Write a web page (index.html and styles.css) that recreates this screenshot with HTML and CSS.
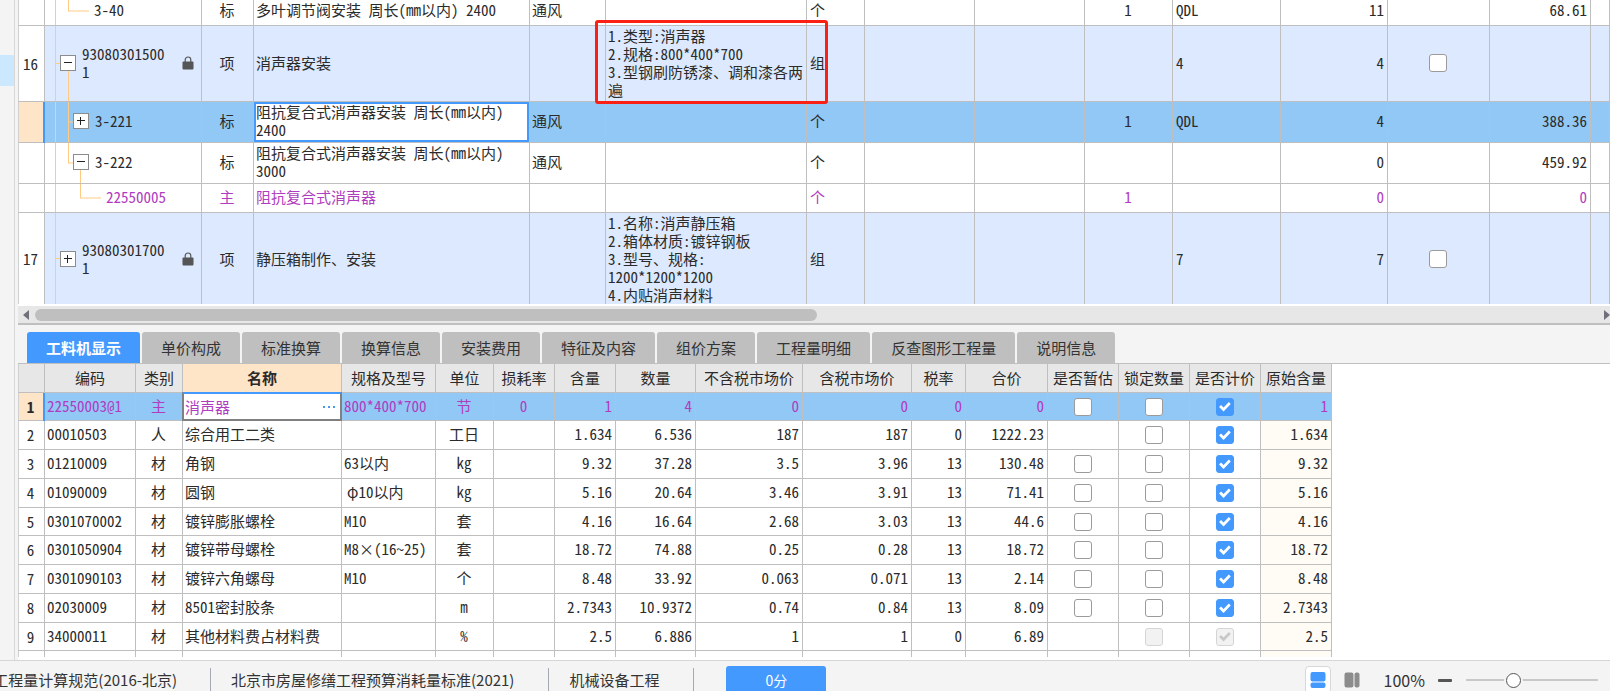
FILE: index.html
```html
<!DOCTYPE html>
<html lang="zh-CN">
<head>
<meta charset="utf-8">
<meta name="viewport" content="width=device-width, initial-scale=1">
<title>工程预算</title>
<link rel="stylesheet" href="styles.css">
</head>
<body>
<svg class="defs" width="0" height="0" aria-hidden="true">
  <symbol id="lock" viewBox="0 0 12 14"><path d="M3.2 6V3.8a2.8 2.8 0 0 1 5.6 0V6" fill="none" stroke="#555" stroke-width="1.2"/><rect x="0.5" y="5.5" width="11" height="8" rx="1" fill="#555"/></symbol>
</svg>
<div class="app">
  <div class="workspace">
    <aside class="rail"><div class="rail-mark"></div></aside>
    <main class="main">
      <div class="bill">
        <table class="grid bill-grid">
          <colgroup><col class="w27"><col class="w157"><col class="w52"><col class="w276"><col class="w76"><col class="w201"><col class="w58"><col class="w110"><col class="w110"><col class="w88"><col class="w108"><col class="w107"><col class="w102"><col class="w101"><col></colgroup>
          <tbody>
            <tr class="h29">
              <td class="c"></td>
              <td class="tree l2"><svg class="lines" aria-hidden="true"><line x1="10.5" y1="0" x2="10.5" y2="100%"/><line x1="23.5" y1="0" x2="23.5" y2="50%"/><line x1="23" y1="50%" x2="44" y2="50%"/></svg>3-40</td>
              <td class="c">标</td><td>多叶调节阀安装 周长(mm以内) 2400</td><td>通风</td><td></td><td>个</td><td></td><td></td><td class="c">1</td><td>QDL</td><td class="r">11</td><td></td><td class="r">68.61</td><td></td>
            </tr>
            <tr class="h76 item">
              <td class="c num">16</td>
              <td class="tree l1"><svg class="lines" aria-hidden="true"><line x1="10.5" y1="0" x2="10.5" y2="100%"/><line x1="10" y1="50%" x2="16" y2="50%"/><line x1="23.5" y1="50%" x2="23.5" y2="100%"/></svg><div class="node"><button class="toggle" type="button" aria-label="折叠"></button><span class="code">930803015001</span><svg class="lock" aria-hidden="true"><use href="#lock"/></svg></div></td>
              <td class="c">项</td><td>消声器安装</td><td></td><td class="marked">1.类型:消声器<br>2.规格:800*400*700<br>3.型钢刷防锈漆、调和漆各两遍<span class="callout"></span></td><td>组</td><td></td><td></td><td></td><td>4</td><td class="r">4</td><td class="c"><input type="checkbox" aria-label="锁定综合单价"></td><td></td><td></td>
            </tr>
            <tr class="h41 selected">
              <td class="c num"></td>
              <td class="tree l2 start"><svg class="lines" aria-hidden="true"><line x1="10.5" y1="0" x2="10.5" y2="100%"/><line x1="23.5" y1="0" x2="23.5" y2="100%"/><line x1="23" y1="50%" x2="29" y2="50%"/></svg><div class="node"><button class="toggle plus" type="button" aria-label="展开"></button><span>3-221</span></div></td>
              <td class="c">标</td><td class="focus">阻抗复合式消声器安装 周长(mm以内) 2400</td><td>通风</td><td></td><td>个</td><td></td><td></td><td class="c">1</td><td>QDL</td><td class="r">4</td><td></td><td class="r">388.36</td><td></td>
            </tr>
            <tr class="h41">
              <td class="c num"></td>
              <td class="tree l2"><svg class="lines" aria-hidden="true"><line x1="10.5" y1="0" x2="10.5" y2="100%"/><line x1="23.5" y1="0" x2="23.5" y2="50%"/><line x1="23" y1="50%" x2="29" y2="50%"/><line x1="35.5" y1="50%" x2="35.5" y2="100%"/></svg><div class="node"><button class="toggle" type="button" aria-label="折叠"></button><span>3-222</span></div></td>
              <td class="c">标</td><td>阻抗复合式消声器安装 周长(mm以内) 3000</td><td>通风</td><td></td><td>个</td><td></td><td></td><td></td><td></td><td class="r">0</td><td></td><td class="r">459.92</td><td></td>
            </tr>
            <tr class="h29 material">
              <td class="c num"></td>
              <td class="tree l3"><svg class="lines" aria-hidden="true"><line x1="10.5" y1="0" x2="10.5" y2="100%"/><line x1="35.5" y1="0" x2="35.5" y2="50%"/><line x1="35" y1="50%" x2="56" y2="50%"/></svg>22550005</td>
              <td class="c">主</td><td>阻抗复合式消声器</td><td></td><td></td><td>个</td><td></td><td></td><td class="c">1</td><td></td><td class="r">0</td><td></td><td class="r">0</td><td></td>
            </tr>
            <tr class="h91 item">
              <td class="c num">17</td>
              <td class="tree l1"><svg class="lines" aria-hidden="true"><line x1="10.5" y1="0" x2="10.5" y2="100%"/><line x1="10" y1="50%" x2="16" y2="50%"/></svg><div class="node"><button class="toggle plus" type="button" aria-label="展开"></button><span class="code">930803017001</span><svg class="lock" aria-hidden="true"><use href="#lock"/></svg></div></td>
              <td class="c">项</td><td>静压箱制作、安装</td><td></td><td>1.名称:消声静压箱<br>2.箱体材质:镀锌钢板<br>3.型号、规格:<br>1200*1200*1200<br>4.内贴消声材料</td><td>组</td><td></td><td></td><td></td><td>7</td><td class="r">7</td><td class="c"><input type="checkbox" aria-label="锁定综合单价"></td><td></td><td></td>
            </tr>
          </tbody>
        </table>
      </div>
      <div class="hscroll">
        <svg class="arrow" viewBox="0 0 6 10" aria-hidden="true"><path d="M6 0v10L0 5z"/></svg>
        <div class="track"><div class="thumb"></div></div>
        <svg class="arrow" viewBox="0 0 6 10" aria-hidden="true"><path d="M0 0v10l6-5z"/></svg>
      </div>
      <nav class="tabs">
        <button type="button" class="tab active">工料机显示</button><button type="button" class="tab">单价构成</button><button type="button" class="tab">标准换算</button><button type="button" class="tab">换算信息</button><button type="button" class="tab">安装费用</button><button type="button" class="tab">特征及内容</button><button type="button" class="tab">组价方案</button><button type="button" class="tab">工程量明细</button><button type="button" class="tab">反查图形工程量</button><button type="button" class="tab">说明信息</button>
      </nav>
      <div class="detail">
        <table class="grid detail-grid">
          <colgroup><col class="w27"><col class="w91"><col class="w47"><col class="w159"><col class="w94"><col class="w58"><col class="w61"><col class="w61"><col class="w80"><col class="w107"><col class="w109"><col class="w54"><col class="w82"><col class="w71"><col class="w71"><col class="w71"><col class="w71"></colgroup>
          <thead>
            <tr><th></th><th>编码</th><th>类别</th><th class="current">名称</th><th>规格及型号</th><th>单位</th><th>损耗率</th><th>含量</th><th>数量</th><th>不含税市场价</th><th>含税市场价</th><th>税率</th><th>合价</th><th>是否暂估</th><th>锁定数量</th><th>是否计价</th><th>原始含量</th></tr>
          </thead>
          <tbody>
            <tr class="selected material"><td class="c num">1</td><td class="start">22550003@1</td><td class="c">主</td><td class="edit"><div class="editor"><input type="text" value="消声器" aria-label="名称"><button type="button" class="more" aria-label="选择"><i></i><i></i><i></i></button></div></td><td>800*400*700</td><td class="c">节</td><td class="c">0</td><td class="r">1</td><td class="r">4</td><td class="r">0</td><td class="r">0</td><td class="r">0</td><td class="r">0</td><td class="c"><input type="checkbox" aria-label="是否暂估"></td><td class="c"><input type="checkbox" aria-label="锁定数量"></td><td class="c"><input type="checkbox" aria-label="是否计价" checked></td><td class="r orig">1</td></tr>
            <tr><td class="c num">2</td><td>00010503</td><td class="c">人</td><td>综合用工二类</td><td></td><td class="c">工日</td><td></td><td class="r">1.634</td><td class="r">6.536</td><td class="r">187</td><td class="r">187</td><td class="r">0</td><td class="r">1222.23</td><td></td><td class="c"><input type="checkbox" aria-label="锁定数量"></td><td class="c"><input type="checkbox" aria-label="是否计价" checked></td><td class="r orig">1.634</td></tr>
            <tr><td class="c num">3</td><td>01210009</td><td class="c">材</td><td>角钢</td><td>63以内</td><td class="c">kg</td><td></td><td class="r">9.32</td><td class="r">37.28</td><td class="r">3.5</td><td class="r">3.96</td><td class="r">13</td><td class="r">130.48</td><td class="c"><input type="checkbox" aria-label="是否暂估"></td><td class="c"><input type="checkbox" aria-label="锁定数量"></td><td class="c"><input type="checkbox" aria-label="是否计价" checked></td><td class="r orig">9.32</td></tr>
            <tr><td class="c num">4</td><td>01090009</td><td class="c">材</td><td>圆钢</td><td class="wide-start">φ10以内</td><td class="c">kg</td><td></td><td class="r">5.16</td><td class="r">20.64</td><td class="r">3.46</td><td class="r">3.91</td><td class="r">13</td><td class="r">71.41</td><td class="c"><input type="checkbox" aria-label="是否暂估"></td><td class="c"><input type="checkbox" aria-label="锁定数量"></td><td class="c"><input type="checkbox" aria-label="是否计价" checked></td><td class="r orig">5.16</td></tr>
            <tr><td class="c num">5</td><td>0301070002</td><td class="c">材</td><td>镀锌膨胀螺栓</td><td>M10</td><td class="c">套</td><td></td><td class="r">4.16</td><td class="r">16.64</td><td class="r">2.68</td><td class="r">3.03</td><td class="r">13</td><td class="r">44.6</td><td class="c"><input type="checkbox" aria-label="是否暂估"></td><td class="c"><input type="checkbox" aria-label="锁定数量"></td><td class="c"><input type="checkbox" aria-label="是否计价" checked></td><td class="r orig">4.16</td></tr>
            <tr><td class="c num">6</td><td>0301050904</td><td class="c">材</td><td>镀锌带母螺栓</td><td>M8×(16~25)</td><td class="c">套</td><td></td><td class="r">18.72</td><td class="r">74.88</td><td class="r">0.25</td><td class="r">0.28</td><td class="r">13</td><td class="r">18.72</td><td class="c"><input type="checkbox" aria-label="是否暂估"></td><td class="c"><input type="checkbox" aria-label="锁定数量"></td><td class="c"><input type="checkbox" aria-label="是否计价" checked></td><td class="r orig">18.72</td></tr>
            <tr><td class="c num">7</td><td>0301090103</td><td class="c">材</td><td>镀锌六角螺母</td><td>M10</td><td class="c">个</td><td></td><td class="r">8.48</td><td class="r">33.92</td><td class="r">0.063</td><td class="r">0.071</td><td class="r">13</td><td class="r">2.14</td><td class="c"><input type="checkbox" aria-label="是否暂估"></td><td class="c"><input type="checkbox" aria-label="锁定数量"></td><td class="c"><input type="checkbox" aria-label="是否计价" checked></td><td class="r orig">8.48</td></tr>
            <tr><td class="c num">8</td><td>02030009</td><td class="c">材</td><td>8501密封胶条</td><td></td><td class="c">m</td><td></td><td class="r">2.7343</td><td class="r">10.9372</td><td class="r">0.74</td><td class="r">0.84</td><td class="r">13</td><td class="r">8.09</td><td class="c"><input type="checkbox" aria-label="是否暂估"></td><td class="c"><input type="checkbox" aria-label="锁定数量"></td><td class="c"><input type="checkbox" aria-label="是否计价" checked></td><td class="r orig">2.7343</td></tr>
            <tr><td class="c num">9</td><td>34000011</td><td class="c">材</td><td>其他材料费占材料费</td><td></td><td class="c">%</td><td></td><td class="r">2.5</td><td class="r">6.886</td><td class="r">1</td><td class="r">1</td><td class="r">0</td><td class="r">6.89</td><td></td><td class="c"><input type="checkbox" aria-label="锁定数量" disabled></td><td class="c"><input type="checkbox" aria-label="是否计价" checked disabled></td><td class="r orig">2.5</td></tr>
            <tr><td></td><td></td><td></td><td></td><td></td><td></td><td></td><td></td><td></td><td></td><td></td><td></td><td></td><td></td><td></td><td></td><td class="orig"></td></tr>
          </tbody>
        </table>
      </div>
    </main>
  </div>
  <footer class="status">
    <div class="status-item first"><span>工程量计算规范(2016-北京)</span></div>
    <div class="status-item">北京市房屋修缮工程预算消耗量标准(2021)</div>
    <div class="status-item">机械设备工程</div>
    <button type="button" class="score">0分</button>
    <div class="view">
      <button type="button" class="mode on" aria-label="上下布局"><svg width="16" height="16" viewBox="0 0 16 16" aria-hidden="true"><rect x="0.5" y="0" width="15" height="9.6" rx="2"/><rect x="0.5" y="10.6" width="15" height="5.4" rx="2"/></svg></button>
      <button type="button" class="mode" aria-label="左右布局"><svg width="16" height="16" viewBox="0 0 16 16" aria-hidden="true"><rect x="0.5" y="0.5" width="9" height="15" rx="2"/><rect x="10.5" y="0.5" width="5" height="15" rx="2"/></svg></button>
      <span class="percent">100%</span>
      <button type="button" class="minus" aria-label="缩小"></button>
      <input type="range" class="zoom" min="0" max="100" value="34" aria-label="缩放">
    </div>
  </footer>
</div>
</body>
</html>
```
FILE: styles.css
```css
:root {
  --line: #bfbfbf;
  --blue: #4499ff;
  --select: #92c8f6;
  --peach: #ffe5c8;
  --panel: #f4f4f4;
  --purple: #b03cc0;
}
* { box-sizing: border-box; }
body {
  margin: 0;
  overflow: hidden;
  background: var(--panel);
  color: #2b2b2b;
  font: 15px/18px "Noto Sans Mono CJK SC", "Noto Sans CJK SC", sans-serif;
  font-variant-ligatures: none;
}
.defs { position: absolute; }
button, input { font: inherit; color: inherit; margin: 0; padding: 0; border: 0; }
.app { display: flex; flex-direction: column; height: 100vh; }
.workspace { display: flex; flex: 1; min-height: 0; border-bottom: 1px solid #d6d6d6; }
.rail { width: 15px; flex: none; border-right: 1px solid #d8d8d8; }
.rail-mark { margin-top: 55px; height: 31px; background: #cce8ff; }
.main { flex: 1; min-width: 0; margin-left: 3px; display: flex; flex-direction: column; }

.bill { overflow: hidden; background: #fff; padding-bottom: 2px; }
.grid { table-layout: fixed; border-collapse: separate; border-spacing: 0; }
.bill-grid { width: 100%; margin-top: -3px; }
.grid td, .grid th {
  position: relative;
  padding: 0 3px 2px 2px;
  border-right: 1px solid var(--line);
  border-bottom: 1px solid var(--line);
  vertical-align: middle;
  text-align: left;
  background: #fff;
}
.grid td:first-child, .grid th:first-child { border-left: 1px solid #d0d0d0; padding: 0 2px 0 0; }
.grid .c { text-align: center; }
.grid .r { text-align: right; }
.bill-grid td:nth-child(7), .bill-grid td:nth-child(11) { padding-left: 3px; }
.bill-grid tr:last-child td { border-bottom: 0; padding-bottom: 0; }
.h29 td { height: 29px; }
.h41 td { height: 41px; }
.h76 td { height: 76px; }
.h91 td { height: 91px; }
.w27 { width: 27px; } .w47 { width: 47px; } .w52 { width: 52px; } .w54 { width: 54px; }
.w58 { width: 58px; } .w61 { width: 61px; } .w71 { width: 71px; } .w76 { width: 76px; }
.w80 { width: 80px; } .w82 { width: 82px; } .w88 { width: 88px; } .w91 { width: 91px; }
.w94 { width: 94px; } .w101 { width: 101px; } .w102 { width: 102px; } .w107 { width: 107px; }
.w108 { width: 108px; } .w109 { width: 109px; } .w110 { width: 110px; } .w157 { width: 157px; }
.w159 { width: 159px; } .w201 { width: 201px; } .w276 { width: 276px; }

.item td:not(.num) { background: #dce9fe; }
.grid .selected td { background: var(--select); }
.grid .selected .num { background: var(--peach); font-weight: 700; }
.grid .selected .start { box-shadow: -2px 0 0 var(--blue); z-index: 1; }
.material td:not(.num) { color: var(--purple); }
.grid .selected .focus { background: #fff; box-shadow: inset 0 0 0 2px var(--blue); }
.selected .num { color: #2b2b2b; }

.grid .l1 { padding-left: 15px; }
.grid .l2 { padding-left: 49px; }
.grid .l3 { padding-left: 61px; }
.grid .l2:has(.node) { padding-left: 28px; }
.lines { position: absolute; left: 0; top: 0; width: 100%; height: 100%; stroke: #ffcb82; }
.node { position: relative; display: flex; align-items: center; gap: 6px; }
.code { width: 84px; word-break: break-all; }
.lock { width: 12px; height: 14px; margin-left: 10px; }
.toggle { position: relative; width: 16px; height: 16px; flex: none; background: #fff; border: 1px solid #8c8c8c; }
.toggle::before, .toggle.plus::after { content: ""; position: absolute; background: #222; left: 3px; top: 6px; width: 8px; height: 1px; }
.toggle.plus::after { left: 6px; top: 3px; width: 1px; height: 8px; }
.marked { z-index: 2; }
.callout { position: absolute; inset: -6px -22px -3px -11px; border: 3px solid #fb2014; border-radius: 3px; pointer-events: none; }

input[type="checkbox"] {
  appearance: none; position: relative; display: block;
  width: 18px; height: 18px; margin: 0 auto;
  background: #fff; border: 1px solid #9b9b9b; border-radius: 3px;
}
input[type="checkbox"]:checked { background: var(--blue); border-color: var(--blue); }
input[type="checkbox"]:checked::before {
  content: ""; position: absolute; inset: 0; background: #fff;
  clip-path: polygon(13% 53%, 25% 41%, 41% 57%, 74% 22%, 86% 34%, 41% 81%);
}
input[type="checkbox"]:disabled { background: #f2f2f2; border-color: #d5d5d5; }
input[type="checkbox"]:disabled::before { background: #c8c8c8; }

.hscroll { display: flex; align-items: center; gap: 6px; height: 19px; padding: 0 0 0 5px; background: #e7e7e7; border-bottom: 2px solid var(--line); }
.arrow { width: 6px; height: 10px; flex: none; fill: #70707a; }
.track { flex: 1; }
.thumb { width: 50%; height: 12px; border-radius: 6px; background: var(--line); }

.tabs { display: flex; gap: 2px; padding: 7px 0 0 9px; border-bottom: 1px solid var(--line); font-family: "Noto Sans CJK SC", sans-serif; }
.tab { height: 31px; padding: 0 19px; background: var(--line); border-radius: 3px 3px 0 0; white-space: nowrap; color: #333; }
.tab.active { background: var(--blue); color: #fff; font-weight: 700; }

.detail { flex: 1; min-height: 0; overflow: hidden; background: #fff; border-bottom: 3px solid #fff; }
.detail-grid { width: 1314px; }
.detail-grid th { height: 29px; padding: 0; background: #e7e7e7; font-weight: 400; text-align: center; white-space: nowrap; }
.detail-grid .current { background: var(--peach); font-weight: 700; }
.detail-grid td { height: 29px; }
.detail-grid td:has([type="checkbox"]) { padding: 0; }
.detail-grid tr:nth-child(4n+1) td { height: 28px; }
.detail-grid .orig { background: #fffbf5; }
.grid .wide-start { padding-left: 5px; }
.grid .selected .edit { padding: 0; background: #fff; }
.editor { position: absolute; inset: -1px -1px -1px -1px; display: flex; align-items: center; padding: 0 5px 0 1px; border: 2px solid #808080; border-top-color: var(--blue); background: #fff; z-index: 1; }
.editor input { flex: 1; min-width: 0; background: none; outline: 0; }
.more { display: flex; gap: 3px; background: none; }
.more i { width: 2px; height: 2px; background: #4a9ae8; }

.status { display: flex; align-items: center; height: 30px; flex: none; padding-top: 8px; overflow: hidden; font-family: "Noto Sans CJK SC", sans-serif; white-space: nowrap; color: #333; }
.status-item { height: 24px; line-height: 24px; padding: 0 34px 0 20px; border-right: 1px solid #a4a9b2; }
.status-item.first { display: flex; justify-content: flex-end; width: 211px; padding: 0 33px 0 0; }
.score { width: 100px; height: 28px; margin-left: 32px; flex: none; background: var(--blue); color: #fff; border-radius: 3px; font-size: 14px; }
.view { display: flex; align-items: center; margin-left: auto; padding-right: 12px; }
.mode { display: flex; justify-content: center; align-items: center; width: 26px; height: 28px; background: none; border: 1px solid transparent; border-radius: 4px; fill: #8c8c8c; }
.mode + .mode { margin-left: 8px; }
.mode.on { background: #fff; border-color: #d8d8d8; fill: var(--blue); }
.percent { margin-left: 19px; font-size: 16px; }
.minus { width: 14px; height: 3px; margin-left: 13px; background: #555; border-radius: 1px; }
.zoom { appearance: none; width: 132px; height: 16px; margin-left: 14px; background: linear-gradient(#c8c8c8, #c8c8c8) center / 100% 2px no-repeat; }
.zoom::-webkit-slider-thumb { appearance: none; width: 15px; height: 15px; border: 1px solid #555; border-radius: 50%; background: #fff; box-shadow: 0 0 0 2px var(--panel); }
```
